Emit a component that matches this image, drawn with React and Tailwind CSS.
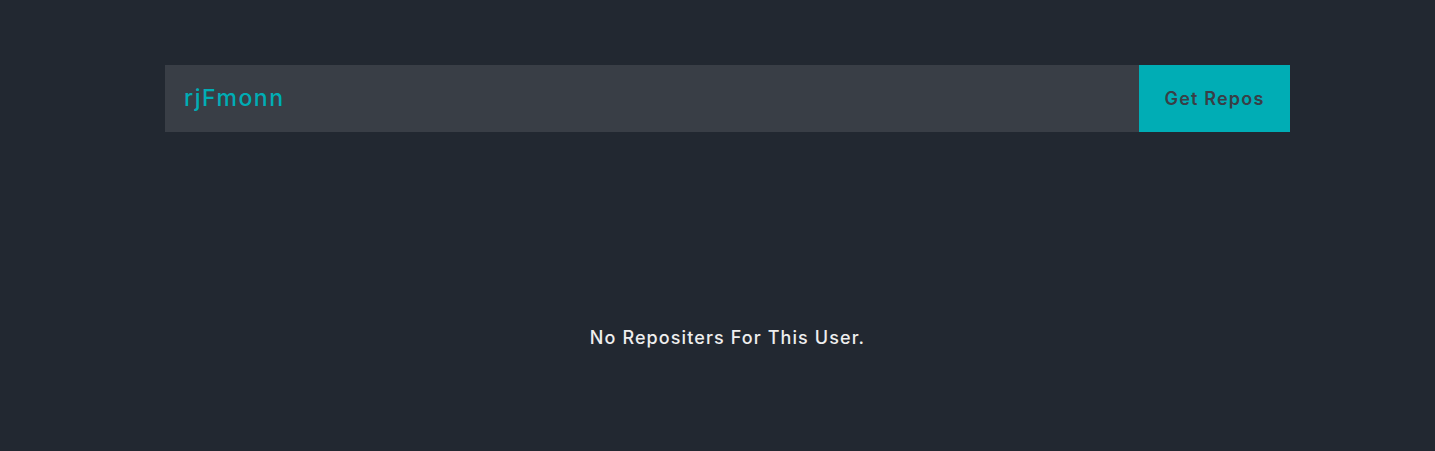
export default function App() {
  return (
    <div className="min-h-[451px] w-full bg-[#222831]" style={{ fontFamily: '"Inter", "Open Sans", sans-serif' }}>
      <div className="ml-[165px] w-[1125px] pt-[65px]">
        <div className="flex h-[67px]">
          <div className="flex flex-1 items-center bg-[#393e46] pl-[19px] text-[23px] font-medium tracking-[1.5px] text-[#00adb5]">
            rjFmonn
          </div>
          <button className="w-[151px] bg-[#00adb5] text-[18px] font-semibold tracking-[1.2px] text-[#393e46]">
            Get Repos
          </button>
        </div>
        <div className="mt-[192px] text-center text-[18px] font-medium tracking-[1.1px] text-[#eeeeee]">
          No Repositers For This User.
        </div>
      </div>
    </div>
  );
}
